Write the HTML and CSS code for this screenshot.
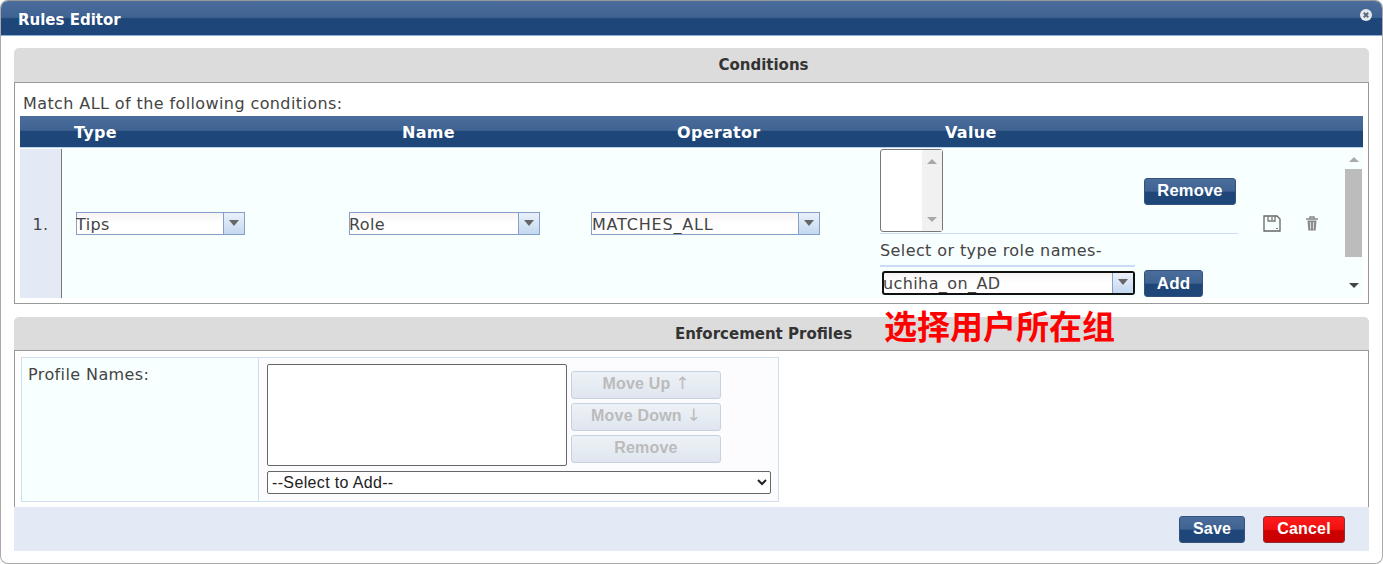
FILE: index.html
```html
<!DOCTYPE html>
<html lang="en">
<head>
    <meta charset="UTF-8">
    <meta name="viewport" content="width=device-width, initial-scale=1.0">
    <title>Rules Editor</title>
    <link rel="stylesheet" href="styles.css">
</head>
<body>

    <div class="dialog">
        <div class="dialog-title">
            <span>Rules Editor</span>
            <svg class="close-icon" width="14" height="14" viewBox="0 0 14 14">
                <circle cx="7" cy="7" r="6" fill="#e4e8ee"/>
                <path d="M4.8 4.8l4.4 4.4M9.2 4.8l-4.4 4.4" stroke="#5a6a7c" stroke-width="2"/>
            </svg>
        </div>

        <div class="dialog-body">
            <div class="section-head">Conditions</div>
            <div class="conditions-box">
                <div class="match-text">Match ALL of the following conditions:</div>
                <div class="rule-head">
                    <div></div>
                    <div class="head-type">Type</div>
                    <div class="head-name">Name</div>
                    <div class="head-operator">Operator</div>
                    <div class="head-value">Value</div>
                </div>
                <div class="rule-row">
                    <div class="rule-num">1.</div>
                    <div class="rule-cell">
                        <div class="combo combo-type">
                            <span class="combo-text">Tips</span>
                            <span class="combo-arrow"></span>
                        </div>
                    </div>
                    <div class="rule-cell">
                        <div class="combo combo-name">
                            <span class="combo-text">Role</span>
                            <span class="combo-arrow"></span>
                        </div>
                    </div>
                    <div class="rule-cell">
                        <div class="combo combo-operator">
                            <span class="combo-text">MATCHES_ALL</span>
                            <span class="combo-arrow"></span>
                        </div>
                    </div>
                    <div class="value-cell">
                        <div class="value-top">
                            <div class="value-list">
                                <div class="value-list-bar">
                                    <span class="arrow-up"></span>
                                    <span class="arrow-down"></span>
                                </div>
                            </div>
                            <button class="btn btn-blue btn-remove" type="button">Remove</button>
                        </div>
                        <div class="value-label">Select or type role names-</div>
                        <div class="value-bottom">
                            <div class="combo combo-role">
                                <span class="combo-text">uchiha_on_AD</span>
                                <span class="combo-arrow"></span>
                            </div>
                            <button class="btn btn-blue btn-add" type="button">Add</button>
                        </div>
                    </div>
                    <div class="icon-cell">
                        <svg width="18" height="17" viewBox="0 0 18 17">
                            <path d="M1 1h13l3 3v12H1z" fill="none" stroke="#666" stroke-width="1.3"/>
                            <path d="M5 1v5h7V1M9 2v3" fill="none" stroke="#777" stroke-width="1.3"/>
                            <path d="M13 13h2v1h-2z" fill="#777"/>
                        </svg>
                        <svg width="14" height="15" viewBox="0 0 14 15">
                            <path d="M1 3h12M5 3V1h4v2" fill="none" stroke="#888" stroke-width="1.4"/>
                            <path d="M2.5 4.5h9l-.8 10H3.300z" fill="#8c8c8c"/>
                            <path d="M5.500 6v7M8.500 6v7" stroke="#ddd" stroke-width="1"/>
                        </svg>
                    </div>
                    <div class="scrollbar">
                        <span class="arrow-up"></span>
                        <div class="scroll-thumb"></div>
                        <span class="arrow-down arrow-dark"></span>
                    </div>
                </div>
            </div>

            <div class="section-head section-profiles">Enforcement Profiles</div>
            <div class="profiles-box">
                <div class="profile-table">
                    <div class="profile-label">Profile Names:</div>
                    <div class="profile-cell">
                        <div class="profile-top">
                            <div class="profile-list"></div>
                            <div class="profile-buttons">
                                <button class="btn btn-off" type="button">Move Up <span class="move-arrow">↑</span></button>
                                <button class="btn btn-off" type="button">Move Down <span class="move-arrow">↓</span></button>
                                <button class="btn btn-off" type="button">Remove</button>
                            </div>
                        </div>
                        <select class="profile-select">
                            <option>--Select to Add--</option>
                        </select>
                    </div>
                </div>
            </div>

            <div class="dialog-footer">
                <button class="btn btn-blue btn-save" type="button">Save</button>
                <button class="btn btn-red" type="button">Cancel</button>
            </div>

            <!-- red note written over the screenshot -->
            <div class="note">选择用户所在组</div>
        </div>
    </div>

</body>
</html>
```

FILE: styles.css
```css
html, body {
    margin: 0;
    height: 564px;
    overflow: hidden;
    background-color: #fff;
}

body {
    font-family: "DejaVu Sans", Verdana, sans-serif;
    font-size: 16px;
    letter-spacing: 0.4px;
    color: #444;
}

.dialog {
    box-sizing: border-box;
    height: 564px;
    border: 1px solid #aaa;
    border-top-color: #999;
    border-radius: 8px;
    background-color: #fff;
    overflow: hidden;
}

.dialog-title {
    display: flex;
    justify-content: space-between;
    align-items: center;
    box-sizing: border-box;
    height: 35px;
    padding: 4px 9px 0 17px;
    color: #fff;
    font-size: 15px;
    font-weight: bold;
    letter-spacing: 0;
    background: linear-gradient(#4a6d9c 0%, #3f6392 48%, #1e4679 52%, #1e4679 100%);
    border-bottom: 1px solid #8fb0d8;
}

.close-icon {
    margin-top: -11px;
}

.dialog-body {
    position: relative;
    padding: 12px 13px 0 13px;
}

.section-head {
    height: 34px;
    padding-left: 144px;
    line-height: 35px;
    text-align: center;
    font-size: 15px;
    font-weight: bold;
    letter-spacing: 0;
    background-color: #dcdcdc;
    border-radius: 5px 5px 0 0;
    color: #333;
}

.conditions-box {
    box-sizing: border-box;
    height: 222px;
    padding: 0 5px;
    border: 1px solid #999;
}

.match-text {
    height: 33px;
    line-height: 41px;
    padding-left: 3px;
    white-space: nowrap;
}

.rule-head {
    display: grid;
    grid-template-columns: 42px 287px 242px 289px 1fr;
    height: 32px;
    line-height: 33px;
    color: #fff;
    font-size: 16px;
    font-weight: bold;
    letter-spacing: 0.3px;
    background: linear-gradient(#4a6d9c 0%, #3f6392 46%, #1e4679 50%, #1e4679 100%);
    border-bottom: 1px solid #b8d2f0;
    box-sizing: border-box;
    margin-bottom: 1px;
}

.head-type { padding-left: 12px; }
.head-name { padding-left: 53px; }
.head-operator { padding-left: 86px; }
.head-value { padding-left: 65px; }

.rule-row {
    display: grid;
    grid-template-columns: 42px 287px 242px 289px 364px 96px 1fr;
    height: 149px;
    background-color: #f8ffff;
}

.rule-num {
    display: flex;
    align-items: center;
    justify-content: center;
    background-color: #e3e9f5;
    border-right: 1px solid #777;
    padding-top: 2px;
    box-sizing: border-box;
}

.rule-cell {
    display: flex;
    align-items: center;
    padding: 0 0 0 14px;
}

.rule-cell + .rule-cell {
    padding-left: 0;
}

.combo {
    display: flex;
    box-sizing: border-box;
    height: 23px;
    border: 1px solid #85a0c8;
    background: linear-gradient(#f7f3f3, #fff 50%);
    color: #444;
}

.combo-text {
    flex: 1;
    margin-left: -1px;
    line-height: 23px;
    white-space: nowrap;
    overflow: hidden;
}

.combo-arrow {
    position: relative;
    width: 20px;
    border-left: 1px solid #85a0c8;
    background: linear-gradient(#eaf1fa, #c4d8f0);
}

.combo-arrow::after {
    content: "";
    position: absolute;
    left: 5px;
    top: 7px;
    border-left: 5px solid transparent;
    border-right: 5px solid transparent;
    border-top: 6px solid #666;
}

.combo-type { width: 169px; }
.combo-name { width: 191px; }
.combo-operator { width: 229px; }

.combo-operator .combo-text {
    margin-left: 0;
    letter-spacing: 0.8px;
}

.combo-role {
    width: 253px;
    height: 24px;
    margin: 1px 0 0 2px;
    border: 2px solid #111;
    border-radius: 3px;
}

.combo-role .combo-text { line-height: 21px; }
.combo-role .combo-arrow { border-left-color: #85a0c8; }
.combo-role .combo-arrow::after { top: 6px; }

.value-cell {
    display: flex;
    flex-direction: column;
    padding-right: 6px;
}

.value-top {
    display: flex;
    align-items: flex-start;
    height: 85px;
    box-sizing: border-box;
    border-bottom: 1px solid #c9dcf5;
}

.value-list {
    display: flex;
    justify-content: flex-end;
    box-sizing: border-box;
    width: 63px;
    height: 83px;
    border: 1px solid #777;
    border-radius: 3px;
    background-color: #fff;
    margin-right: 201px;
}

.value-list-bar {
    display: flex;
    flex-direction: column;
    justify-content: space-between;
    align-items: center;
    width: 20px;
    padding: 9px 0;
    box-sizing: border-box;
    background-color: #f1f1f1;
}

.arrow-up, .arrow-down {
    display: block;
    width: 0;
    height: 0;
    border-left: 5px solid transparent;
    border-right: 5px solid transparent;
}

.arrow-up { border-bottom: 5px solid #a9a9a9; }
.arrow-down { border-top: 5px solid #a9a9a9; }
.arrow-dark { border-top-color: #444; }

.btn {
    box-sizing: border-box;
    height: 27px;
    padding: 0;
    font-family: "Liberation Sans", Arial, sans-serif;
    font-size: 16px;
    font-weight: bold;
    letter-spacing: 0.2px;
    border-radius: 3px;
    cursor: pointer;
}

.btn-blue {
    color: #fff;
    border: 1px solid #34527c;
    background: linear-gradient(#4a6d9c 0%, #3f6392 48%, #1e4679 54%, #1e4679 100%);
}

.btn-red {
    width: 82px;
    color: #fff;
    border: 1px solid #8e3030;
    background: linear-gradient(#ff1c1c 0%, #f01010 50%, #cc0000 55%, #cc0000 100%);
}

.btn-off {
    height: 28px;
    padding-bottom: 2px;
    color: #bbb;
    border: 1px solid #c6d2e0;
    background: linear-gradient(#eef2f7, #dfe6ef);
}

.move-arrow {
    font-family: "DejaVu Sans", sans-serif;
    font-size: 17px;
    font-weight: normal;
    line-height: 16px;
}

.btn-remove {
    width: 92px;
    margin-top: 29px;
    padding-bottom: 2px;
    font-size: 16.5px;
}

.value-label {
    height: 33px;
    line-height: 33px;
    box-sizing: border-box;
    width: 255px;
    border-bottom: 2px solid #c9dcf5;
    white-space: nowrap;
}

.value-bottom {
    display: flex;
    align-items: flex-start;
    gap: 9px;
    padding-top: 3px;
}

.btn-add {
    width: 59px;
    font-size: 17px;
}

.icon-cell {
    display: flex;
    align-items: center;
    gap: 24px;
    padding: 0 0 0 19px;
}

.scrollbar {
    display: flex;
    flex-direction: column;
    align-items: center;
    box-sizing: border-box;
    padding: 8px 0 0 4px;
    height: 149px;
}

.scroll-thumb {
    width: 17px;
    height: 88px;
    margin: 7px 0 26px;
    background-color: #bcbcbc;
}

.section-profiles {
    height: 33px;
    margin-top: 13px;
}

.profiles-box {
    box-sizing: border-box;
    height: 157px;
    padding: 6px 6px 0;
    border: 1px solid #999;
    border-bottom: none;
}

.profile-table {
    display: grid;
    grid-template-columns: 237px 1fr;
    box-sizing: border-box;
    width: 758px;
    height: 145px;
    border: 1px solid #cfe0f5;
}

.profile-label {
    padding: 7px 6px;
    background-color: #f8ffff;
    border-right: 1px solid #cfe0f5;
}

.profile-cell {
    min-width: 0;
    padding: 6px 7px 6px 8px;
    background-color: #fcfcff;
}

.profile-top {
    display: flex;
    gap: 4px;
}

.profile-list {
    box-sizing: border-box;
    width: 300px;
    height: 102px;
    border: 1px solid #666;
    border-radius: 2px;
    background-color: #fff;
}

.profile-buttons {
    display: flex;
    flex-direction: column;
    gap: 4px;
    width: 150px;
    padding-top: 7px;
}

.profile-select {
    display: block;
    box-sizing: border-box;
    width: 504px;
    height: 23px;
    margin-top: 5px;
    padding: 0;
    font-family: "Liberation Sans", Arial, sans-serif;
    font-size: 16px;
    letter-spacing: 0.35px;
    color: #222;
    background-color: #fff;
    border: 1px solid #666;
    border-radius: 2px;
}

.dialog-footer {
    display: flex;
    justify-content: flex-end;
    align-items: center;
    gap: 18px;
    height: 44px;
    padding-right: 24px;
    background-color: #e3e9f5;
}

.btn-save {
    width: 66px;
}

.note {
    position: absolute;
    left: 883px;
    top: 269px;
    color: #f00;
    font-family: "Noto Sans CJK SC", sans-serif;
    font-size: 33px;
    font-weight: bold;
    line-height: 40px;
    letter-spacing: 0;
    white-space: nowrap;
}
```
